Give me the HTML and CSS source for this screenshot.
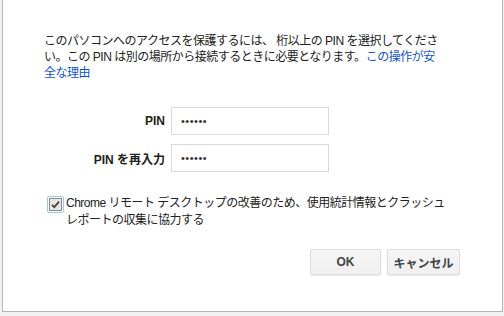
FILE: index.html
```html
<!DOCTYPE html>
<html lang="ja">
<head>
<meta charset="utf-8">
<title>PIN</title>
<link rel="stylesheet" href="styles.css">
</head>
<body>
<div class="dialog">
  <p class="message">このパソコンへのアクセスを保護するには、 桁以上の PIN を選択してくださ<br>い。この PIN は別の場所から接続するときに必要となります。<a href="#" class="link">この操作が安<br>全な理由</a></p>
  <div class="form">
    <label class="label" for="pin1">PIN</label>
    <input class="field" id="pin1" type="password" value="123456">
    <label class="label" for="pin2">PIN を再入力</label>
    <input class="field" id="pin2" type="password" value="123456">
  </div>
  <label class="consent">
    <span class="box"><svg viewBox="0 0 13 13" width="13" height="13"><rect x="0.5" y="0.5" width="12" height="12" fill="#e6e6e6" stroke="#8a8a8a"/><path d="M3 6.8 L5.3 9.2 L10 3.6" fill="none" stroke="#444" stroke-width="1.8"/></svg></span>
    <span class="consent-text">Chrome リモート デスクトップの改善のため、使用統計情報とクラッシュ<br>レポートの収集に協力する</span>
  </label>
  <div class="buttons">
    <button class="btn btn-ok">OK</button>
    <button class="btn btn-cancel">キャンセル</button>
  </div>
</div>
</body>
</html>
```
FILE: styles.css
```css
html, body {
  margin: 0;
  padding: 0;
}
body {
  width: 504px;
  height: 316px;
  background: #f2f2f2;
  font-family: "Liberation Sans", "Noto Sans CJK JP", sans-serif;
  color: #222;
  overflow: hidden;
}
.dialog {
  box-sizing: border-box;
  margin-left: 2px;
  width: 501px;
  height: 312px;
  background: #fff;
  border: 1px solid #b5b5b5;
  border-top: none;
  padding: 33px 42px 0 41px;
}
.message {
  margin: 0;
  font-size: 12px;
  line-height: 16px;
  letter-spacing: -0.5px;
  white-space: nowrap;
}
.link {
  color: #15c;
  text-decoration: none;
}
.form {
  display: grid;
  grid-template-columns: 121px 158px;
  column-gap: 6px;
  row-gap: 9px;
  margin-top: 26px;
  align-items: center;
}
.label {
  text-align: right;
  font-weight: bold;
  font-size: 12px;
  color: #222;
}
.field {
  box-sizing: border-box;
  width: 158px;
  height: 28px;
  margin: 0;
  border: 1px solid #d9d9d9;
  border-radius: 0;
  padding: 0 9px;
  font-family: "Liberation Sans", sans-serif;
  font-size: 11px;
  letter-spacing: 0.5px;
  color: #333;
  outline: none;
}
.consent {
  display: flex;
  align-items: flex-start;
  margin-top: 24px;
  font-size: 12px;
  line-height: 17px;
}
.box {
  display: flex;
  margin: 0 2px 0 3px;
  padding: 1px;
  border: 1px solid #9ec5f2;
  border-radius: 2px;
}
.box svg {
  display: block;
}
.consent-text {
  white-space: nowrap;
  letter-spacing: -0.5px;
  margin-top: -1px;
}
.buttons {
  display: flex;
  justify-content: flex-end;
  gap: 6px;
  margin-top: 20px;
}
.btn {
  box-sizing: border-box;
  height: 26px;
  padding: 0;
  border: 1px solid #dcdcdc;
  border-radius: 2px;
  background: linear-gradient(#f5f5f5, #f0f0f0);
  box-shadow: 0 1px 1px rgba(0, 0, 0, 0.08);
  font-family: "Liberation Sans", "Noto Sans CJK JP", sans-serif;
  font-weight: bold;
  font-size: 12px;
  color: #444;
}
.btn-ok {
  width: 71px;
}
.btn-cancel {
  width: 73px;
}
```
